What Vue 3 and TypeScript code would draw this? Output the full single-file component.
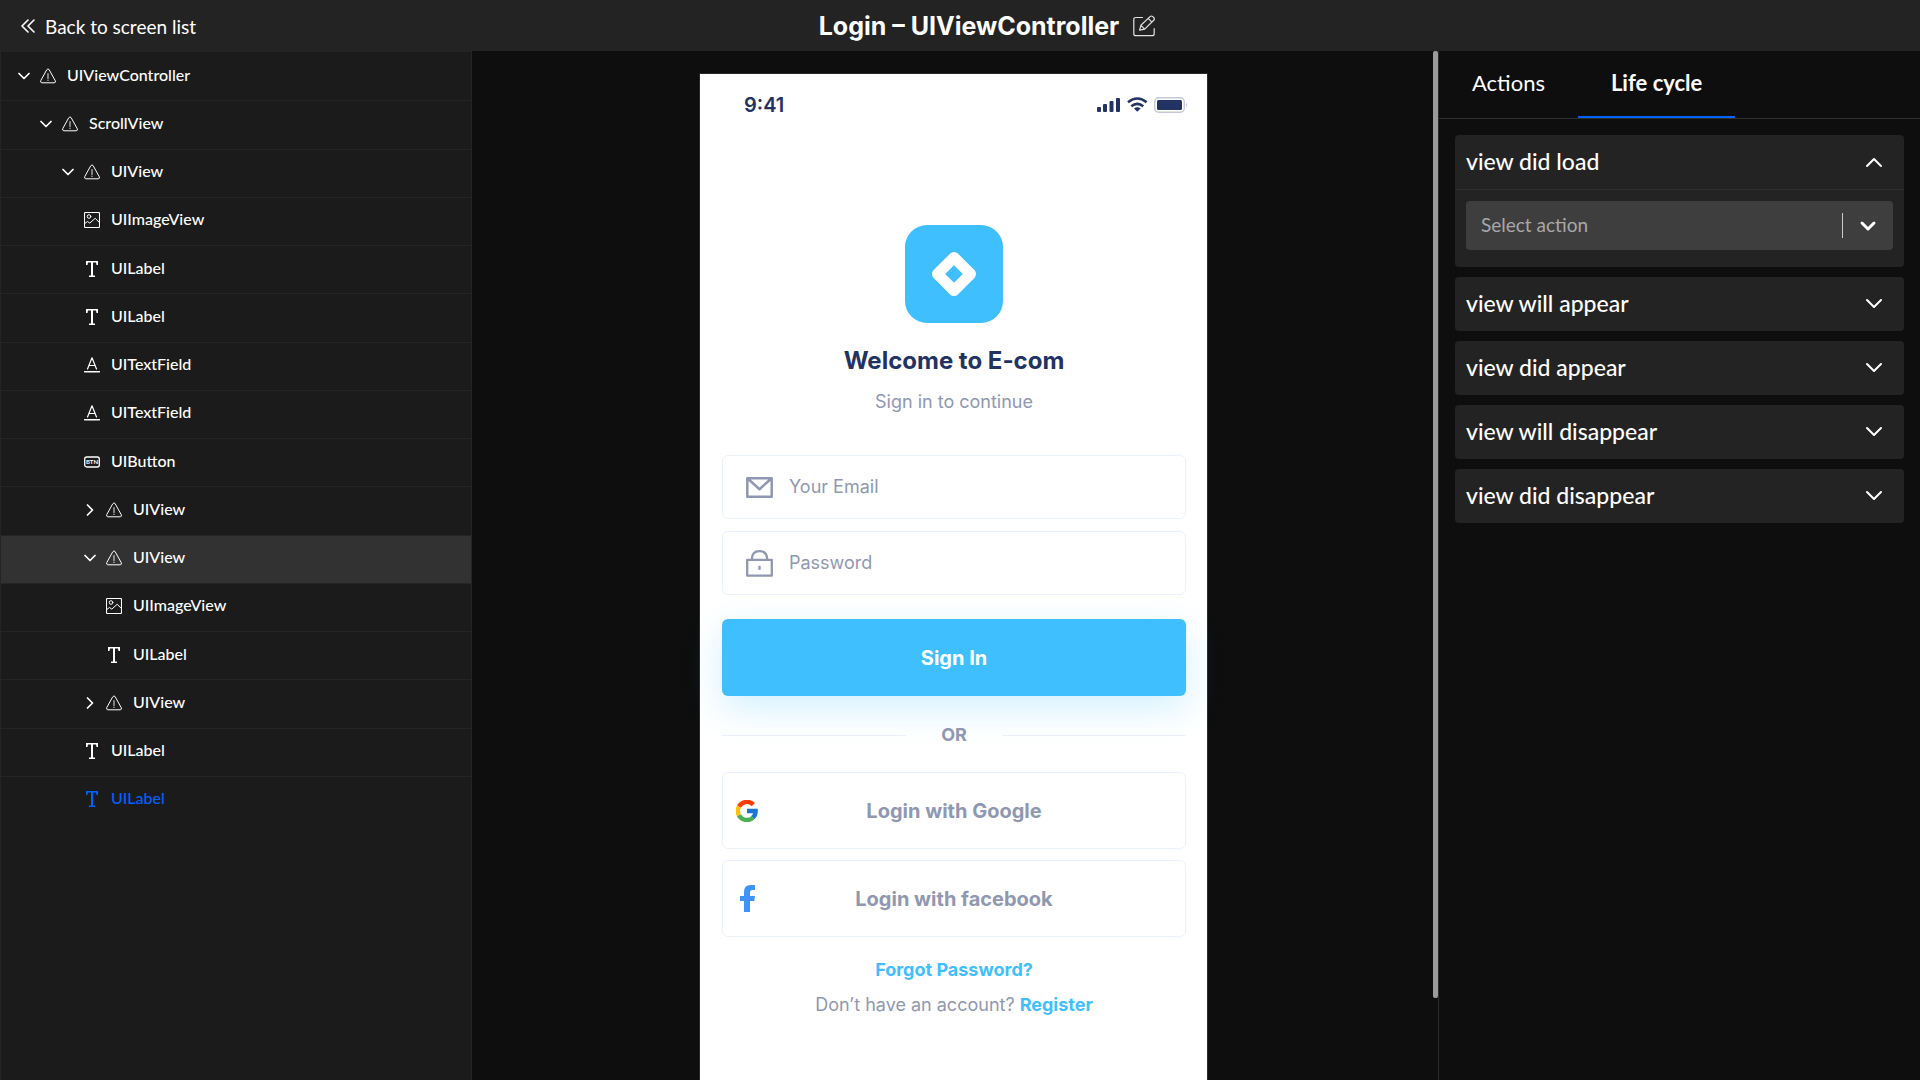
<script setup lang="ts">
import { ref } from 'vue'

type NodeKind = 'view' | 'image' | 'label' | 'field' | 'button'

interface TreeNode {
  name: string
  kind: NodeKind
  level: number
  state?: 'open' | 'closed'
  highlighted?: boolean
  active?: boolean
}

const nodes: TreeNode[] = [
  { name: 'UIViewController', kind: 'view', level: 0, state: 'open' },
  { name: 'ScrollView', kind: 'view', level: 1, state: 'open' },
  { name: 'UIView', kind: 'view', level: 2, state: 'open' },
  { name: 'UIImageView', kind: 'image', level: 3 },
  { name: 'UILabel', kind: 'label', level: 3 },
  { name: 'UILabel', kind: 'label', level: 3 },
  { name: 'UITextField', kind: 'field', level: 3 },
  { name: 'UITextField', kind: 'field', level: 3 },
  { name: 'UIButton', kind: 'button', level: 3 },
  { name: 'UIView', kind: 'view', level: 3, state: 'closed' },
  { name: 'UIView', kind: 'view', level: 3, state: 'open', highlighted: true },
  { name: 'UIImageView', kind: 'image', level: 4 },
  { name: 'UILabel', kind: 'label', level: 4 },
  { name: 'UIView', kind: 'view', level: 3, state: 'closed' },
  { name: 'UILabel', kind: 'label', level: 3 },
  { name: 'UILabel', kind: 'label', level: 3, active: true },
]

const tabs = ['Actions', 'Life cycle']
const currentTab = ref('Life cycle')

const events = [
  'view did load',
  'view will appear',
  'view did appear',
  'view will disappear',
  'view did disappear',
]
const openEvent = ref('view did load')
const action = ref('')

function toggle(name: string): void {
  openEvent.value = openEvent.value === name ? '' : name
}
</script>

<template>
  <div class="app">
    <header class="topbar">
      <a class="back" href="#">
        <svg width="14" height="14" viewBox="0 0 14 14" fill="none" stroke="currentColor" stroke-width="1.6" stroke-linecap="round" stroke-linejoin="round">
          <path d="M7 1 1 7l6 6M13 1 7 7l6 6" />
        </svg>
        Back to screen list
      </a>
      <div class="title">
        <h1>Login – UIViewController</h1>
        <button class="edit" type="button" aria-label="Rename screen">
          <svg width="22" height="22" viewBox="0 0 22 22" fill="none" stroke="currentColor" stroke-width="1.2" stroke-linecap="round" stroke-linejoin="round">
            <path d="M9.5 2.5H2.8Q.8 2.5.8 4.5v14.2q0 2 2 2h16.4q2 0 2-2v-5" />
            <path d="m6.6 15.2 1.3-4.9L17 1.6q1.3-1.2 2.8 0l.9.9q1.3 1.4 0 2.8l-9 8.8zM15.2 3.4l3.7 3.7M7.9 10.3l3.8 3.8" />
          </svg>
        </button>
      </div>
    </header>

    <main class="workspace">
      <nav class="sidebar" aria-label="View hierarchy">
        <ul class="tree">
          <li v-for="(node, i) in nodes" :key="i" :class="{ highlighted: node.highlighted, active: node.active }">
            <button class="node" type="button" :style="{ paddingLeft: 17 + node.level * 22 + 'px' }">
              <svg v-if="node.state" class="chevron" :class="node.state" width="12" height="12" viewBox="0 0 12 12" fill="none" stroke="currentColor" stroke-width="1.7" stroke-linecap="round" stroke-linejoin="round">
                <path d="m1 3.5 5 5 5-5" />
              </svg>
              <svg class="kind" width="16" height="16" viewBox="0 0 16 16" fill="none" stroke="currentColor" stroke-linecap="round" stroke-linejoin="round">
                <template v-if="node.kind === 'view'">
                  <path d="M6.9 1.6q1.1-1.5 2.2 0l6.2 11.2q.7 1.8-1.1 2H1.8q-1.8-.2-1.1-2z" />
                  <path d="M8 5.5v5M8 12v.4" stroke-width="1.2" opacity=".75" />
                </template>
                <template v-else-if="node.kind === 'image'">
                  <rect x=".5" y=".5" width="15" height="15" rx="1" stroke-width="1.1" />
                  <circle cx="5" cy="4.5" r="1.8" />
                  <path d="m.8 11.5 2.7-2 2.3 1.6 5.400-4.800 4.200 4.200" />
                </template>
                <path v-else-if="node.kind === 'label'" fill="currentColor" stroke="none" d="M2 0h12v4h-1.500L12 1.600H9v12.800h2V16H5v-1.600h2V1.600H4L3.500 4H2z" />
                <template v-else-if="node.kind === 'field'">
                  <path d="M.5 14.700h15" stroke-width="1.400" />
                  <path d="M3.500 12 8 .8 12.500 12M5 8.500h6" stroke-width="1.200" />
                </template>
                <template v-else>
                  <rect x=".7" y="3" width="14.600" height="10" rx="2" stroke-width="1.300" />
                  <text class="glyph" x="8" y="10" text-anchor="middle" fill="currentColor" stroke="none">BTN</text>
                </template>
              </svg>
              <span>{{ node.name }}</span>
            </button>
          </li>
        </ul>
      </nav>

      <section class="canvas" aria-label="Screen preview">
        <div class="phone">
          <div class="status">
            <span class="clock">9:41</span>
            <svg width="91" height="18" viewBox="0 0 91 18" fill="#223263">
              <rect x="0" y="11" width="4" height="5" rx="1" />
              <rect x="6" y="8" width="4" height="8" rx="1" />
              <rect x="12.500" y="5" width="4" height="11" rx="1" />
              <rect x="19" y="2" width="4" height="14" rx="1" />
              <g fill="none" stroke="#223263" stroke-width="2.600">
                <path d="M31 6.200q9.300-7.400 18.600 0" />
                <path d="M34.300 10.200q6-4.600 12 0" />
              </g>
              <path d="M37 12.400q3.300-2.200 6.600 0l-3.300 3.400z" />
              <rect x="57.700" y="1.700" width="29.600" height="14.600" rx="4" fill="none" stroke="#c4c8d8" stroke-width="1.400" />
              <rect x="60" y="4" width="25" height="10" rx="1.500" />
              <path d="M89 6.500q2 2.500 0 5z" fill="#c4c8d8" />
            </svg>
          </div>

          <form class="login" @submit.prevent>
            <svg class="logo" width="98" height="98" viewBox="0 0 98 98">
              <rect width="98" height="98" rx="22" fill="#40bfff" />
              <path d="M49 32.500 65.500 49 49 65.500 32.500 49z" fill="none" stroke="#fff" stroke-width="11" stroke-linejoin="round" />
              <path d="m49 40.500 8.500 8.500-8.500 8.500-8.500-8.500z" fill="#40bfff" />
            </svg>
            <h2>Welcome to E-com</h2>
            <p class="lead">Sign in to continue</p>

            <label class="field">
              <svg width="27" height="27" viewBox="0 0 27 27" fill="none" stroke="#9098b1" stroke-width="2.500" stroke-linejoin="round">
                <path d="M1.300 4.300h24.400v18.400H1.300zM2 4.800l11.500 10.400L25 4.800" />
              </svg>
              <input type="email" placeholder="Your Email" aria-label="Your Email" />
            </label>
            <label class="field">
              <svg width="27" height="27" viewBox="0 0 27 27" fill="none" stroke="#9098b1" stroke-width="2.300" stroke-linejoin="round">
                <path d="M1.200 9.800h24.600v15.900H1.200zM5.800 9.600q0-8.400 7.700-8.400t7.700 8.400" />
                <path d="M13.500 15.800v4" />
              </svg>
              <input type="password" placeholder="Password" aria-label="Password" />
            </label>

            <button class="primary" type="submit">Sign In</button>

            <div class="or"><span>OR</span></div>

            <button class="social" type="button">
              <svg width="22" height="22" viewBox="0 0 22 22" fill="none" stroke-width="4.400">
                <path d="M3 6.600A9 9 0 0 1 17.300 4.600" stroke="#ff3d00" />
                <path d="M2.900 15.200a9 9 0 0 1 .1-8.600" stroke="#ffc107" />
                <path d="M17 17.600A9 9 0 0 1 2.900 15.200" stroke="#4caf50" />
                <path d="M11 11h8.600q.1 4-2.800 6.700" stroke="#1976d2" />
              </svg>
              <span>Login with Google</span>
            </button>
            <button class="social" type="button">
              <svg width="22" height="27" viewBox="0 0 22 27" fill="#4092ff">
                <path d="M8 27V16H4v-5h4V7q0-7 6.500-7H19v5h-2.800Q14 5 14 7.200V11h5l-.8 5H14v11z" />
              </svg>
              <span>Login with facebook</span>
            </button>

            <a class="forgot" href="#">Forgot Password?</a>
            <p class="signup">Don’t have an account? <a href="#">Register</a></p>
          </form>
        </div>
        <div class="scrollbar"><div class="thumb"></div></div>
      </section>

      <aside class="panel">
        <div class="tabs" role="tablist">
          <button v-for="tab in tabs" :key="tab" type="button" role="tab" :aria-selected="tab === currentTab" :class="{ current: tab === currentTab }" @click="currentTab = tab">{{ tab }}</button>
        </div>
        <div class="events">
          <section v-for="event in events" :key="event" class="event">
            <button class="event-head" type="button" :aria-expanded="event === openEvent" @click="toggle(event)">
              <span>{{ event }}</span>
              <svg :class="{ flipped: event === openEvent }" width="18" height="18" viewBox="0 0 18 18" fill="none" stroke="currentColor" stroke-width="2" stroke-linecap="round" stroke-linejoin="round">
                <path d="m2 5 7 7 7-7" />
              </svg>
            </button>
            <div v-if="event === openEvent" class="event-body">
              <div class="picker">
                <select v-model="action" aria-label="Select action">
                  <option value="" disabled>Select action</option>
                </select>
                <span class="picker-arrow">
                  <svg width="18" height="18" viewBox="0 0 18 18" fill="none" stroke="currentColor" stroke-width="3" stroke-linecap="round" stroke-linejoin="round">
                    <path d="m3 6 6 6 6-6" />
                  </svg>
                </span>
              </div>
            </div>
          </section>
        </div>
      </aside>
    </main>
  </div>
</template>

<style>
body {
  margin: 0;
  background: #0e0e0e;
}
</style>

<style scoped>
.app {
  display: flex;
  flex-direction: column;
  height: 100vh;
  overflow: hidden;
  color: #fff;
  font-family: Lato, 'Open Sans', sans-serif;
  font-size: 16px;
}

button {
  border: 0;
  padding: 0;
  background: none;
  color: inherit;
  font: inherit;
  cursor: pointer;
}

a {
  color: inherit;
  text-decoration: none;
}

svg {
  flex: none;
}

.topbar {
  display: grid;
  grid-template-columns: 1fr auto 1fr;
  align-items: center;
  flex: none;
  height: 51px;
  background: #232323;
}

.back {
  display: flex;
  align-items: center;
  gap: 10px;
  padding: 1px 0 0 21px;
  font-size: 19px;
}

.title {
  display: flex;
  align-items: center;
  gap: 14px;
  padding-left: 54px;
}

.title h1 {
  margin: 0;
  font: 700 25px/32px Inter, sans-serif;
}

.edit {
  display: flex;
  color: #e0e0e0;
}

.workspace {
  display: flex;
  flex: 1;
  min-height: 0;
}

.sidebar {
  flex: 0 0 472px;
  box-sizing: border-box;
  border: 1px solid #252525;
  border-bottom: 0;
  background: #1b1b1b;
}

.tree {
  display: grid;
  grid-auto-rows: 1fr;
  min-height: 772px;
  margin: 0;
  padding: 0;
  list-style: none;
}

.tree li {
  display: flex;
  border-top: 1px solid #252525;
}

.tree li:first-child {
  border-top-color: transparent;
}

.tree .highlighted {
  background: #323232;
}

.tree .active {
  color: #0062ff;
}

.node {
  display: flex;
  align-items: center;
  flex: 1;
  padding-bottom: 2px;
  text-align: left;
  font-weight: 500;
  line-height: 20px;
}

.node span {
  padding-bottom: 2px;
}

.chevron {
  margin-right: 10px;
}

.chevron.closed {
  transform: rotate(-90deg);
}

.kind {
  margin-right: 11px;
}

.glyph {
  font: 700 6px Lato, sans-serif;
}

.canvas {
  display: flex;
  justify-content: center;
  position: relative;
  flex: 1;
  min-width: 0;
  padding-top: 22px;
  overflow: hidden;
  background: #0e0e0e;
}

.phone {
  box-sizing: border-box;
  width: 509px;
  margin-right: 3px;
  border: 1px solid #2a2a2a;
  border-bottom: 0;
  background: #fff;
  color: #9098b1;
  font-family: Inter, 'Open Sans', sans-serif;
}

.status {
  display: flex;
  align-items: center;
  justify-content: space-between;
  padding: 19px 19px 0 44px;
}

.clock {
  color: #223263;
  font: 600 20px/24px Inter, sans-serif;
}

.login {
  display: flex;
  flex-direction: column;
  padding: 108px 21px 0 22px;
}

.logo {
  align-self: center;
}

.login h2 {
  margin: 23px 0 0;
  color: #223263;
  font-size: 24px;
  line-height: 30px;
  text-align: center;
}

.lead {
  margin: 14px 0 41px;
  font-size: 18px;
  line-height: 24px;
  text-align: center;
}

.field {
  display: flex;
  align-items: center;
  gap: 16px;
  box-sizing: border-box;
  height: 64px;
  margin-bottom: 12px;
  padding: 0 23px;
  border: 1px solid #ebf0ff;
  border-radius: 6px;
}

.field input {
  flex: 1;
  min-width: 0;
  padding: 0;
  border: 0;
  outline: 0;
  background: none;
  color: #223263;
  font: 400 18px/24px Inter, sans-serif;
}

.field input::placeholder {
  color: #9098b1;
  opacity: 1;
}

.primary {
  height: 77px;
  margin-top: 12px;
  border-radius: 6px;
  background: #40bfff;
  box-shadow: 0 12px 36px rgba(64, 191, 255, 0.24);
  color: #fff;
  font-weight: 700;
  font-size: 20px;
}

.or {
  display: flex;
  align-items: center;
  gap: 32px;
  margin: 27px 0 25px;
  font-weight: 700;
  font-size: 18px;
  line-height: 24px;
}

.or::before,
.or::after {
  content: '';
  flex: 1;
  height: 1px;
  background: #ebf0ff;
}

.or span {
  width: 32px;
  text-align: center;
}

.social {
  display: flex;
  align-items: center;
  box-sizing: border-box;
  height: 77px;
  margin-bottom: 11px;
  padding: 0 35px 0 13px;
  border: 1px solid #ebf0ff;
  border-radius: 6px;
  font-weight: 700;
  font-size: 20px;
}

.social span {
  flex: 1;
}

.forgot {
  align-self: center;
  margin-top: 10px;
  color: #40bfff;
  font-weight: 700;
  font-size: 18px;
  line-height: 24px;
}

.signup {
  margin: 11px 0 0;
  font-size: 18px;
  line-height: 24px;
  text-align: center;
}

.signup a {
  color: #40bfff;
  font-weight: 700;
}

.scrollbar {
  position: absolute;
  top: 0;
  right: 0;
  bottom: 0;
  width: 5px;
}

.thumb {
  height: 92%;
  border-radius: 2px;
  background: #9b9b9b;
}

.panel {
  flex: 0 0 482px;
  box-sizing: border-box;
  border-left: 1px solid #2c2c2c;
  background: #0e0e0e;
}

.tabs {
  display: flex;
  border-bottom: 1px solid #2f2f2f;
}

.tabs button {
  height: 67px;
  padding: 0 33px 3px;
  border-bottom: 2px solid transparent;
  font-size: 22px;
}

.tabs .current {
  border-bottom-color: #0062ff;
  font-weight: 700;
}

.events {
  display: flex;
  flex-direction: column;
  gap: 10px;
  padding: 16px;
}

.event {
  overflow: hidden;
  border-radius: 4px;
  background: #232323;
}

.event-head {
  display: flex;
  align-items: center;
  justify-content: space-between;
  width: 100%;
  height: 54px;
  padding: 0 21px 0 11px;
  font-weight: 500;
  font-size: 23px;
}

.event-head span {
  padding-bottom: 3px;
}

.flipped {
  transform: rotate(180deg);
}

.event-body {
  padding: 11px 11px 17px;
  border-top: 1px solid #2f2f2f;
}

.picker {
  display: flex;
  align-items: center;
  position: relative;
  height: 49px;
  border-radius: 4px;
  background: #3e3e3e;
}

.picker select {
  width: 100%;
  height: 100%;
  padding: 0 66px 2px 15px;
  border: 0;
  outline: 0;
  appearance: none;
  background: none;
  color: #a8a8a8;
  font: inherit;
  font-size: 19px;
}

.picker-arrow {
  display: flex;
  align-items: center;
  position: absolute;
  top: 12px;
  right: 16px;
  height: 25px;
  padding-left: 16px;
  border-left: 1px solid #ccc;
  pointer-events: none;
}
</style>
